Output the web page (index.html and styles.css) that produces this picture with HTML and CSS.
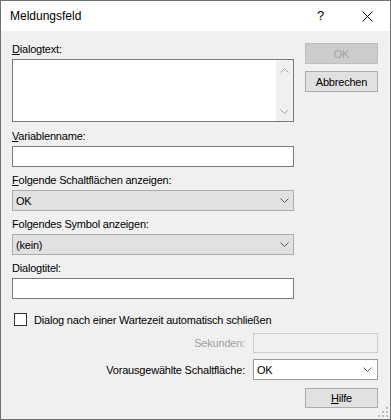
FILE: index.html
```html
<!DOCTYPE html>
<html lang="de">
<head>
<meta charset="utf-8">
<link rel="stylesheet" href="styles.css">
</head>
<body>
<div class="window">
  <div class="titlebar">
    <div class="title">Meldungsfeld</div>
    <div class="help">?</div>
    <div class="close">
      <svg width="11" height="11" viewBox="0 0 11 11"><path d="M0.5 0.5 L10.5 10.5 M10.5 0.5 L0.5 10.5" stroke="#000" stroke-width="1" fill="none"/></svg>
    </div>
  </div>
  <div class="client">
    <div class="top">
      <div class="fields">
        <div class="label first"><u>D</u>ialogtext:</div>
        <div class="textarea">
          <div class="scroll">
            <svg class="sarrow" width="9" height="5" viewBox="0 0 9 5"><path d="M0.5 4.5 L4.5 0.5 L8.5 4.5" stroke="#a6a6a6" fill="none"/></svg>
            <svg class="sarrow" width="9" height="5" viewBox="0 0 9 5"><path d="M0.5 0.5 L4.5 4.5 L8.5 0.5" stroke="#a6a6a6" fill="none"/></svg>
          </div>
        </div>
        <div class="label"><u>V</u>ariablenname:</div>
        <div class="input"></div>
        <div class="label"><u>F</u>olgende Schaltflächen anzeigen:</div>
        <div class="select"><span>OK</span>
          <svg width="9" height="5" viewBox="0 0 9 5"><path d="M0.5 0.5 L4.5 4.5 L8.5 0.5" stroke="#555" fill="none"/></svg>
        </div>
        <div class="label">Folgendes Symbol anzeigen:</div>
        <div class="select"><span>(kein)</span>
          <svg width="9" height="5" viewBox="0 0 9 5"><path d="M0.5 0.5 L4.5 4.5 L8.5 0.5" stroke="#555" fill="none"/></svg>
        </div>
        <div class="label">Dialogtitel:</div>
        <div class="input"></div>
      </div>
      <div class="buttons">
        <div class="btn disabled">OK</div>
        <div class="btn">Abbrechen</div>
      </div>
    </div>
    <div class="checkrow">
      <div class="checkbox"></div>
      <span>Dialog nach einer Wartezeit automatisch schließen</span>
    </div>
    <div class="row sek">
      <span class="rlabel grey">Sekunden:</span>
      <div class="input small disabled"></div>
    </div>
    <div class="row vor">
      <span class="rlabel">Vorausgewählte Schaltfläche:</span>
      <div class="combo"><span>OK</span>
        <svg width="9" height="5" viewBox="0 0 9 5"><path d="M0.5 0.5 L4.5 4.5 L8.5 0.5" stroke="#555" fill="none"/></svg>
      </div>
    </div>
    <div class="row hilfe">
      <div class="btn"><u>H</u>ilfe</div>
    </div>
    <svg class="grip" width="11" height="11" viewBox="0 0 11 11">
      <rect x="8" y="0" width="2" height="2" fill="#bcbcbc"/>
      <rect x="4" y="4" width="2" height="2" fill="#bcbcbc"/>
      <rect x="8" y="4" width="2" height="2" fill="#bcbcbc"/>
      <rect x="0" y="8" width="2" height="2" fill="#bcbcbc"/>
      <rect x="4" y="8" width="2" height="2" fill="#bcbcbc"/>
      <rect x="8" y="8" width="2" height="2" fill="#bcbcbc"/>
    </svg>
  </div>
</div>
</body>
</html>
```

FILE: styles.css
```css
html, body {
  margin: 0;
  padding: 0;
  background: #ffffff;
}
.window {
  width: 391px;
  height: 420px;
  box-sizing: border-box;
  border: 1px solid #707070;
  display: flex;
  flex-direction: column;
  font-family: "Liberation Sans", Arial, sans-serif;
  font-size: 11px;
  letter-spacing: -0.2px;
  color: #000;
}
.titlebar {
  height: 30px;
  background: #fff;
  display: flex;
  align-items: center;
  flex-shrink: 0;
}
.title {
  font-size: 12px;
  letter-spacing: 0;
  padding-left: 9px;
  flex: 1;
  padding-bottom: 1px;
}
.help {
  font-size: 13px;
  width: 10px;
  letter-spacing: 0;
  margin-right: 35px;
  padding-bottom: 1px;
}
.close {
  width: 11px;
  height: 11px;
  margin-right: 17px;
  display: flex;
}
.client {
  flex: 1;
  background: #f0f0f0;
  padding: 0 12px 0 11px;
  position: relative;
}
.top {
  display: flex;
  gap: 11px;
}
.fields {
  width: 282px;
  display: flex;
  flex-direction: column;
}
.label {
  height: 13px;
  line-height: 13px;
  margin-top: 7px;
  margin-bottom: 3px;
  white-space: nowrap;
}
.label.first {
  margin-top: 12px;
}
.textarea {
  height: 63px;
  box-sizing: border-box;
  border: 1px solid #7a7a7a;
  background: #fff;
  display: flex;
  justify-content: flex-end;
  margin-bottom: 1px;
}
.scroll {
  width: 17px;
  background: #f0f0f0;
  display: flex;
  flex-direction: column;
  justify-content: space-between;
  align-items: center;
  padding: 8px 0 7px;
}
.input {
  height: 21px;
  box-sizing: border-box;
  border: 1px solid #7a7a7a;
  background: #fff;
}
.select {
  height: 21px;
  box-sizing: border-box;
  border: 1px solid #adadad;
  background: #e1e1e1;
  display: flex;
  align-items: center;
  justify-content: space-between;
  padding: 0 4px 0 3px;
}
.buttons {
  width: 73px;
  display: flex;
  flex-direction: column;
  gap: 7px;
  padding-top: 12px;
}
.btn {
  height: 21px;
  box-sizing: border-box;
  border: 1px solid #adadad;
  background: #e1e1e1;
  display: flex;
  align-items: center;
  justify-content: center;
  width: 73px;
}
.btn.disabled {
  background: #cccccc;
  border-color: #bfbfbf;
  color: #a0a0a0;
}
.checkrow {
  display: flex;
  align-items: center;
  height: 13px;
  margin-top: 14px;
  padding-left: 2px;
  gap: 7px;
}
.checkbox {
  width: 13px;
  height: 13px;
  box-sizing: border-box;
  border: 1px solid #333;
  background: #fff;
}
.row {
  display: flex;
  justify-content: flex-end;
  align-items: center;
  gap: 8px;
}
.rlabel {
  white-space: nowrap;
}
.grey {
  color: #a0a0a0;
}
.sek {
  margin-top: 7px;
}
.input.small {
  width: 125px;
  height: 20px;
}
.input.disabled {
  border-color: #cccccc;
  background: #f0f0f0;
}
.vor {
  margin-top: 6px;
}
.combo {
  width: 125px;
  height: 21px;
  box-sizing: border-box;
  border: 1px solid #9a9a9a;
  background: #fff;
  display: flex;
  align-items: center;
  justify-content: space-between;
  padding: 0 5px 0 3px;
}
.hilfe {
  margin-top: 8px;
}
.hilfe .btn {
  height: 20px;
}
.grip {
  position: absolute;
  right: 1px;
  bottom: 1px;
}
```
